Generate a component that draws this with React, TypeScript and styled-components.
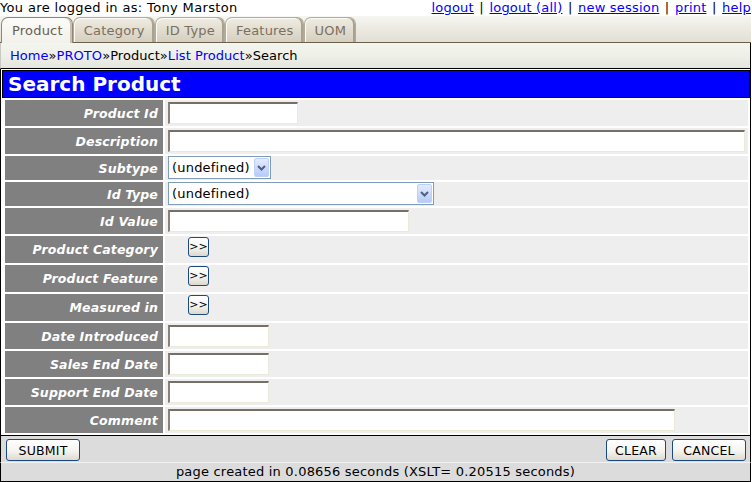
import React from 'react';
import styled, { createGlobalStyle, css } from 'styled-components';

const Global = createGlobalStyle`
  html, body { margin: 0; padding: 0; background: #fff; }
  body {
    font-family: "DejaVu Sans", Verdana, sans-serif;
    font-size: 13px;
    letter-spacing: 0.2px;
    color: #000;
  }
  * { box-sizing: border-box; }
`;

const Page = styled.div`
  width: 751px;
`;

const TopBar = styled.div`
  display: flex;
  justify-content: space-between;
  align-items: center;
  height: 16px;
  line-height: 14px;
  white-space: nowrap;
`;

const Who = styled.span`
  letter-spacing: 0.35px;
`;

const Links = styled.div`
  display: flex;
`;

const TopLink = styled.a`
  color: #0000ff;
  text-decoration: underline;
`;

const Sep = styled.span`
  padding: 0 5.5px;
`;

const TabBar = styled.div`
  display: flex;
  align-items: flex-end;
  height: 27px;
  padding-left: 1px;
  background: linear-gradient(#f6f6f2, #eceae2 45%, #e2e0d5);
  border-bottom: 1px solid #6e5e4c;
`;

const Tab = styled.div<{ $active?: boolean }>`
  height: 25px;
  padding: 0 9px 0 10px;
  display: flex;
  align-items: center;
  border: 1px solid #b3ab9a;
  border-bottom: none;
  border-radius: 7px 7px 0 0;
  color: #7b6f61;
  background: linear-gradient(#efece2, #e2ddcf 50%, #d5cfbf);
  box-shadow: inset -2px 0 0 #aaa290, inset 1px 1px 0 #fbfaf6;
  ${(p) =>
    p.$active &&
    css`
      height: 26px;
      margin-bottom: -1px;
      color: #6a5e50;
      border-color: #8f8574;
      background: linear-gradient(#fcfcfa, #f5f4ef 60%, #f2f1ea);
      box-shadow: inset -2px 0 0 #c9c2b2;
    `}
`;

const Crumbs = styled.div`
  height: 26px;
  line-height: 25px;
  padding-left: 9px;
  letter-spacing: 0.05px;
  border-left: 1px solid #c9c9c2;
  border-right: 1px solid #000;
  border-bottom: 1px solid #000;
  background: linear-gradient(#f3f5ef, #eef0e8 50%, #e5e7de);
  white-space: nowrap;
`;

const CrumbLink = styled.a`
  color: #0000ff;
  text-decoration: none;
`;

const Main = styled.div`
  border-left: 1px solid #000;
  border-right: 1px solid #000;
  border-bottom: 1px solid #000;
  padding: 1px 0 0 1px;
`;

const Title = styled.div`
  height: 28px;
  line-height: 26px;
  border: 1px solid #000;
  background: #0000ff;
  color: #fff;
  font-weight: bold;
  font-size: 20px;
  letter-spacing: 0;
  padding-left: 5px;
`;

const Grid = styled.div`
  display: grid;
  grid-template-columns: 158px 1fr;
  gap: 2px;
  padding: 2px 2px 2px 3px;
`;

const Label = styled.div`
  background: #808080;
  color: #fff;
  font-weight: bold;
  font-style: italic;
  font-size: 12.5px;
  letter-spacing: 0.15px;
  display: flex;
  align-items: center;
  justify-content: flex-end;
  padding-right: 5px;
  white-space: nowrap;
`;

type Kind = 'input' | 'select' | 'button';

const Value = styled.div<{ $kind: Kind }>`
  background: #eeeeee;
  display: flex;
  align-items: ${(p) => (p.$kind === 'button' ? 'flex-start' : 'center')};
  padding: ${(p) =>
    p.$kind === 'input' ? '2px 3px' : p.$kind === 'select' ? '0 3px 1px' : '1px 3px 6px'};
`;

const TextBox = styled.input<{ $w: number }>`
  width: ${(p) => p.$w}px;
  height: 22px;
  margin: 0;
  padding: 0 3px;
  background: #fff;
  border-style: solid;
  border-width: 2px 1px 1px 2px;
  border-color: #776f66 #ebe9d8 #ebe9d8 #8a827a;
  font: 13px "DejaVu Sans", Verdana, sans-serif;
  outline: none;
`;

const SelectBox = styled.div<{ $w: number }>`
  width: ${(p) => p.$w}px;
  height: 23px;
  border: 1px solid #7f9db9;
  background: #fff;
  display: flex;
  align-items: center;
  justify-content: space-between;
  padding: 0 1px 0 3px;
  white-space: nowrap;
`;

const Arrow = styled.span`
  width: 15px;
  height: 19px;
  display: flex;
  align-items: center;
  justify-content: center;
  border: 1px solid #bdd0f7;
  border-radius: 2px;
  background: linear-gradient(#e3ebfe, #c9d8fb 60%, #b8cbf6);
`;

const MoreBtn = styled.button`
  width: 21px;
  height: 20px;
  margin: 0 0 0 20px;
  padding: 0;
  border: 1px solid #1c4a80;
  border-radius: 3px;
  background: linear-gradient(#ffffff, #f3f3ef 55%, #dcd8cc);
  font: 11px "DejaVu Sans", Verdana, sans-serif;
  color: #000;
  line-height: 16px;
`;

const ButtonBar = styled.div`
  display: flex;
  align-items: flex-start;
  height: 26px;
  padding: 3px 4px 0 5px;
  border-left: 1px solid #000;
  border-right: 1px solid #000;
  background: #dcdcdc;
`;

const Spacer = styled.div`
  flex: 1;
`;

const ActionBtn = styled.button<{ $w: number; $ml?: number }>`
  width: ${(p) => p.$w}px;
  height: 22px;
  margin: 0 0 0 ${(p) => p.$ml ?? 0}px;
  padding: 0;
  border: 1px solid #1c4a80;
  border-radius: 3px;
  background: linear-gradient(#ffffff, #f4f4f0 55%, #dedace);
  font: 12.5px "DejaVu Sans", Verdana, sans-serif;
  letter-spacing: 0.2px;
  color: #000;
`;

const Footer = styled.div`
  height: 20px;
  line-height: 18px;
  text-align: center;
  border-top: 1px solid #f2f2f2;
  border-left: 1px solid #000;
  border-right: 1px solid #000;
  border-bottom: 1px solid #000;
  background: #dcdcdc;
`;

const Chevron = () => (
  <svg width="9" height="6" viewBox="0 0 9 6">
    <path d="M1 1 L4.5 4.5 L8 1" fill="none" stroke="#4d6185" strokeWidth="2" />
  </svg>
);

type Field =
  | { label: string; kind: 'input'; w: number }
  | { label: string; kind: 'select'; w: number }
  | { label: string; kind: 'button' };

const fields: Field[] = [
  { label: 'Product Id', kind: 'input', w: 130 },
  { label: 'Description', kind: 'input', w: 577 },
  { label: 'Subtype', kind: 'select', w: 103 },
  { label: 'Id Type', kind: 'select', w: 266 },
  { label: 'Id Value', kind: 'input', w: 241 },
  { label: 'Product Category', kind: 'button' },
  { label: 'Product Feature', kind: 'button' },
  { label: 'Measured in', kind: 'button' },
  { label: 'Date Introduced', kind: 'input', w: 101 },
  { label: 'Sales End Date', kind: 'input', w: 101 },
  { label: 'Support End Date', kind: 'input', w: 101 },
  { label: 'Comment', kind: 'input', w: 507 },
];

const tabs = ['Product', 'Category', 'ID Type', 'Features', 'UOM'];
const topLinks = ['logout', 'logout (all)', 'new session', 'print', 'help'];

export default function App() {
  return (
    <Page>
      <Global />
      <TopBar>
        <Who>You are logged in as: Tony Marston</Who>
        <Links>
          {topLinks.map((l, i) => (
            <React.Fragment key={l}>
              {i > 0 && <Sep>|</Sep>}
              <TopLink href="#">{l}</TopLink>
            </React.Fragment>
          ))}
        </Links>
      </TopBar>
      <TabBar>
        {tabs.map((t, i) => (
          <Tab key={t} $active={i === 0}>
            {t}
          </Tab>
        ))}
      </TabBar>
      <Crumbs>
        <CrumbLink href="#">Home</CrumbLink>»<CrumbLink href="#">PROTO</CrumbLink>»Product»
        <CrumbLink href="#">List Product</CrumbLink>»Search
      </Crumbs>
      <Main>
        <Title>Search Product</Title>
        <Grid>
          {fields.map((f) => (
            <React.Fragment key={f.label}>
              <Label>{f.label}</Label>
              <Value $kind={f.kind}>
                {f.kind === 'input' && <TextBox $w={f.w} defaultValue="" />}
                {f.kind === 'select' && (
                  <SelectBox $w={f.w}>
                    <span>(undefined)</span>
                    <Arrow>
                      <Chevron />
                    </Arrow>
                  </SelectBox>
                )}
                {f.kind === 'button' && <MoreBtn>&gt;&gt;</MoreBtn>}
              </Value>
            </React.Fragment>
          ))}
        </Grid>
      </Main>
      <ButtonBar>
        <ActionBtn $w={74}>SUBMIT</ActionBtn>
        <Spacer />
        <ActionBtn $w={60}>CLEAR</ActionBtn>
        <ActionBtn $w={74} $ml={6}>CANCEL</ActionBtn>
      </ButtonBar>
      <Footer>page created in 0.08656 seconds (XSLT= 0.20515 seconds)</Footer>
    </Page>
  );
}
